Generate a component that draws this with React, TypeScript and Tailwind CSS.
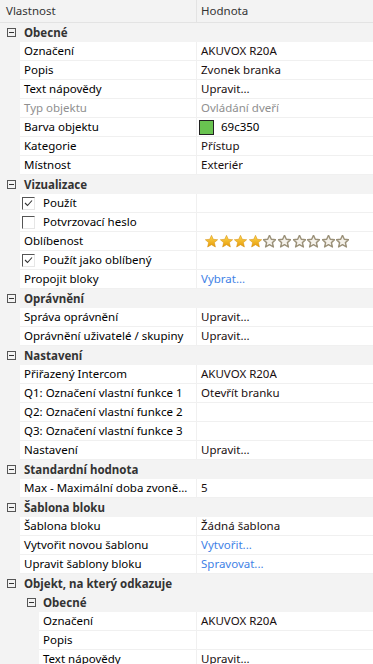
import React from 'react';

type Row =
  | { kind: 'group'; label: string; level?: number }
  | {
      kind: 'prop';
      label: string;
      value?: string;
      type?: 'text' | 'disabled' | 'link' | 'color' | 'stars' | 'check';
      checked?: boolean;
      level?: number;
    };

const rows: Row[] = [
  { kind: 'group', label: 'Obecné' },
  { kind: 'prop', label: 'Označení', value: 'AKUVOX R20A' },
  { kind: 'prop', label: 'Popis', value: 'Zvonek branka' },
  { kind: 'prop', label: 'Text nápovědy', value: 'Upravit...' },
  { kind: 'prop', label: 'Typ objektu', value: 'Ovládání dveří', type: 'disabled' },
  { kind: 'prop', label: 'Barva objektu', value: '69c350', type: 'color' },
  { kind: 'prop', label: 'Kategorie', value: 'Přístup' },
  { kind: 'prop', label: 'Místnost', value: 'Exteriér' },
  { kind: 'group', label: 'Vizualizace' },
  { kind: 'prop', label: 'Použít', type: 'check', checked: true },
  { kind: 'prop', label: 'Potvrzovací heslo', type: 'check', checked: false },
  { kind: 'prop', label: 'Oblíbenost', type: 'stars' },
  { kind: 'prop', label: 'Použít jako oblíbený', type: 'check', checked: true },
  { kind: 'prop', label: 'Propojit bloky', value: 'Vybrat...', type: 'link' },
  { kind: 'group', label: 'Oprávnění' },
  { kind: 'prop', label: 'Správa oprávnění', value: 'Upravit...' },
  { kind: 'prop', label: 'Oprávnění uživatelé / skupiny', value: 'Upravit...' },
  { kind: 'group', label: 'Nastavení' },
  { kind: 'prop', label: 'Přiřazený Intercom', value: 'AKUVOX R20A' },
  { kind: 'prop', label: 'Q1: Označení vlastní funkce 1', value: 'Otevřít branku' },
  { kind: 'prop', label: 'Q2: Označení vlastní funkce 2' },
  { kind: 'prop', label: 'Q3: Označení vlastní funkce 3' },
  { kind: 'prop', label: 'Nastavení', value: 'Upravit...' },
  { kind: 'group', label: 'Standardní hodnota' },
  { kind: 'prop', label: 'Max - Maximální doba zvoně...', value: '5' },
  { kind: 'group', label: 'Šablona bloku' },
  { kind: 'prop', label: 'Šablona bloku', value: 'Žádná šablona' },
  { kind: 'prop', label: 'Vytvořit novou šablonu', value: 'Vytvořit...', type: 'link' },
  { kind: 'prop', label: 'Upravit šablony bloku', value: 'Spravovat...', type: 'link' },
  { kind: 'group', label: 'Objekt, na který odkazuje' },
  { kind: 'group', label: 'Obecné', level: 1 },
  { kind: 'prop', label: 'Označení', value: 'AKUVOX R20A', level: 1 },
  { kind: 'prop', label: 'Popis', level: 1 },
  { kind: 'prop', label: 'Text nápovědy', value: 'Upravit...', level: 1 },
];

function MinusBox() {
  return (
    <div className="w-[9px] h-[9px] border border-[#555] flex items-center justify-center">
      <div className="w-[5px] h-px bg-[#333]" />
    </div>
  );
}

const STAR = 'M6.5 0.3 L8.3 4.3 L12.7 4.7 L9.4 7.6 L10.4 12 L6.5 9.7 L2.6 12 L3.6 7.6 L0.3 4.7 L4.7 4.3 Z';

function Star({ on }: { on: boolean }) {
  return (
    <svg width="13" height="13" viewBox="0 0 13 13" className="shrink-0">
      <defs>
        <linearGradient id="gold" x1="0" y1="0" x2="0" y2="1">
          <stop offset="0" stopColor="#ffd84f" />
          <stop offset="1" stopColor="#e59a08" />
        </linearGradient>
      </defs>
      {on ? (
        <path d={STAR} fill="url(#gold)" stroke="#d38d0c" strokeWidth="0.5" />
      ) : (
        <path d={STAR} fill="#f4f1ea" stroke="#9a9078" strokeWidth="1.4" strokeLinejoin="round" />
      )}
    </svg>
  );
}

function Checkbox({ checked }: { checked: boolean }) {
  return (
    <div className="w-[13px] h-[13px] border border-l-[#555] border-t-[#555] border-r-[#e6e6e6] border-b-[#e6e6e6] bg-white flex items-center justify-center">
      {checked && (
        <svg width="9" height="8" viewBox="0 0 9 8">
          <path d="M1 4 L3.5 6.5 L8 1.5" fill="none" stroke="#333" strokeWidth="1.1" />
        </svg>
      )}
    </div>
  );
}

function ValueCell({ row }: { row: Extract<Row, { kind: 'prop' }> }) {
  const t = row.type ?? 'text';
  if (t === 'stars') {
    return (
      <div className="flex items-center gap-[1.6px] pl-[8px]">
        {Array.from({ length: 10 }).map((_, i) => (
          <Star key={i} on={i < 4} />
        ))}
      </div>
    );
  }
  if (t === 'color') {
    return (
      <div className="flex items-center pl-[2px]">
        <div className="w-[15px] h-[15px] border border-[#222] bg-[#69c350]" />
        <span className="ml-[7px] text-black">{row.value}</span>
      </div>
    );
  }
  if (t === 'check') return null;
  const color =
    t === 'disabled' ? 'text-[#8f8f8f]' : t === 'link' ? 'text-[#3f82e6]' : 'text-[#1a0f0f]';
  return <span className={`pl-[4px] truncate ${color}`}>{row.value}</span>;
}

export default function App() {
  return (
    <div
      className="w-[373px] h-[664px] overflow-hidden bg-white text-[11.5px] leading-[16px] select-none"
      style={{ fontFamily: '"Segoe UI", "Noto Sans", "Open Sans", sans-serif' }}
    >
      {/* header */}
      <div className="flex h-[23px] bg-[#f3f3f3] border-b border-[#e3e3e3] text-[#333]">
        <div className="w-[197px] flex items-center pl-[6px] border-r border-[#e3e3e3]">Vlastnost</div>
        <div className="flex-1 flex items-center pl-[4px]">Hodnota</div>
      </div>

      {rows.map((row, i) => {
        const level = row.level ?? 0;
        if (row.kind === 'group') {
          return (
            <div key={i} className="flex items-center h-[19px] bg-[#f3f3f3] font-bold text-[#333]">
              <div className={level === 1 ? 'w-[43px] flex items-center pl-[27px]' : 'w-[24px] flex items-center pl-[7px]'}>
                <MinusBox />
              </div>
              <span>{row.label}</span>
            </div>
          );
        }
        const gutter = level === 1 ? 'w-[39px]' : 'w-[20px]';
        const labelW = level === 1 ? 'w-[157px]' : 'w-[176px]';
        return (
          <div key={i} className="flex h-[19px] bg-[#f3f3f3]">
            <div className={`${gutter} shrink-0`} />
            <div className={`${labelW} shrink-0 flex items-center bg-white border-b border-[#f0f0f0]`}>
              {row.type === 'check' ? (
                <>
                  <div className="ml-[2px]">
                    <Checkbox checked={!!row.checked} />
                  </div>
                  <span className="ml-[8px] text-black">{row.label}</span>
                </>
              ) : (
                <span
                  className={`pl-[4px] pr-[4px] truncate ${row.type === 'disabled' ? 'text-[#8f8f8f]' : 'text-black'}`}
                >
                  {row.label}
                </span>
              )}
            </div>
            <div className="w-px shrink-0 bg-[#f0f0f0]" />
            <div className="flex-1 min-w-0 flex items-center bg-white border-b border-[#f0f0f0]">
              <ValueCell row={row} />
            </div>
          </div>
        );
      })}
    </div>
  );
}
